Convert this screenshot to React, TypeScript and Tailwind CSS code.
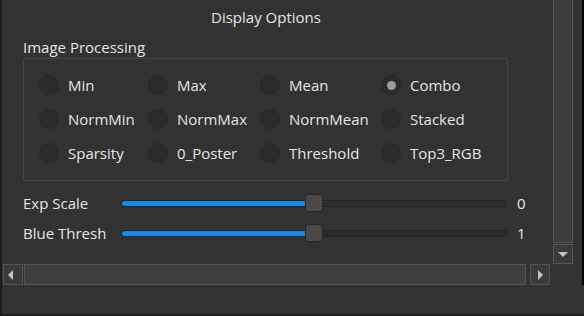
import { FC } from 'react';

const options = [
  ['Min', 'Max', 'Mean', 'Combo'],
  ['NormMin', 'NormMax', 'NormMean', 'Stacked'],
  ['Sparsity', '0_Poster', 'Threshold', 'Top3_RGB'],
];

const Radio: FC<{ label: string; checked?: boolean }> = ({ label, checked }) => (
  <div className="flex h-[34px] items-center gap-[9px]">
    <span className="flex h-[20px] w-[20px] shrink-0 items-center justify-center rounded-full border border-[#272727] bg-[#2b2b2b]">
      {checked && <span className="h-[9px] w-[9px] rounded-full bg-[#9c9c9c]" />}
    </span>
    <span>{label}</span>
  </div>
);

const Slider: FC<{ label: string; value: number; pct: number }> = ({ label, value, pct }) => (
  <div className="flex h-[30px] items-center">
    <span className="w-[98px]">{label}</span>
    <div className="relative flex h-[7px] w-[386px] rounded-[3px] border border-[#222] bg-[#2c2c2c]">
      <div className="h-full rounded-l-[3px] bg-[#1688e6]" style={{ width: `${pct}%` }} />
      <div
        className="absolute top-[-7px] h-[18px] w-[18px] rounded-[3px] border border-[#262626] bg-[#4a4a4a]"
        style={{ left: `calc(${pct}% - 9px)` }}
      />
    </div>
    <span className="ml-[10px]">{value}</span>
  </div>
);

const Arrow: FC<{ dir: 'left' | 'right' | 'down' }> = ({ dir }) => {
  const pts = dir === 'left' ? '9,4 9,14 4,9' : dir === 'right' ? '9,4 9,14 14,9' : '4,7 14,7 9,12';
  const ptsR = dir === 'right' ? '7,4 7,14 12,9' : pts;
  return (
    <svg width="18" height="18" viewBox="0 0 18 18">
      <polygon points={ptsR} fill="#c4c4c4" />
    </svg>
  );
};

export default function App() {
  return (
    <div
      className="flex h-[316px] w-[584px] flex-col border-b-2 border-l-2 border-[#1c1c1c] bg-[#323232] text-[15px] leading-[20px] text-[#e6e6e6]"
      style={{ fontFamily: '"Open Sans", "Noto Sans", sans-serif' }}
    >
      <div className="flex h-[264px]">
        <div className="w-[551px] pl-[21px] pt-[7px]">
          <div className="w-[486px] text-center">Display Options</div>
          <div className="mt-[10px] h-[21px]">Image Processing</div>
          <div className="w-[485px] rounded-[2px] border border-[#464646] pb-[10px] pl-[15px] pt-[9px]">
            {options.map((row, r) => (
              <div key={r} className="grid grid-cols-[109px_112px_121px_1fr]">
                {row.map((o) => (
                  <Radio key={o} label={o} checked={o === 'Combo'} />
                ))}
              </div>
            ))}
          </div>
          <div className="mt-[7px]">
            <Slider label="Exp Scale" value={0} pct={50} />
            <Slider label="Blue Thresh" value={1} pct={50} />
          </div>
        </div>
        <div className="flex w-[20px] flex-col gap-[1px]">
          <div className="flex-1 border border-t-0 border-[#555] bg-[#3d3d3d]" />
          <div className="flex h-[20px] items-center justify-center border border-[#555] bg-[#3a3a3a]">
            <Arrow dir="down" />
          </div>
        </div>
        <div className="w-[9px]" />
        <div className="w-[2px] bg-black" />
      </div>
      <div className="flex h-[21px] gap-[1px] pl-[1px]">
        <div className="flex w-[20px] items-center justify-center border border-[#555] bg-[#3a3a3a]">
          <Arrow dir="left" />
        </div>
        <div className="w-[504px] border border-[#555] bg-[#404040]" />
        <div className="ml-[3px] flex w-[20px] items-center justify-center border border-[#555] bg-[#3a3a3a]">
          <Arrow dir="right" />
        </div>
        <div className="w-[30px]" />
        <div className="w-[2px] bg-black" />
      </div>
      <div className="flex-1" />
    </div>
  );
}
